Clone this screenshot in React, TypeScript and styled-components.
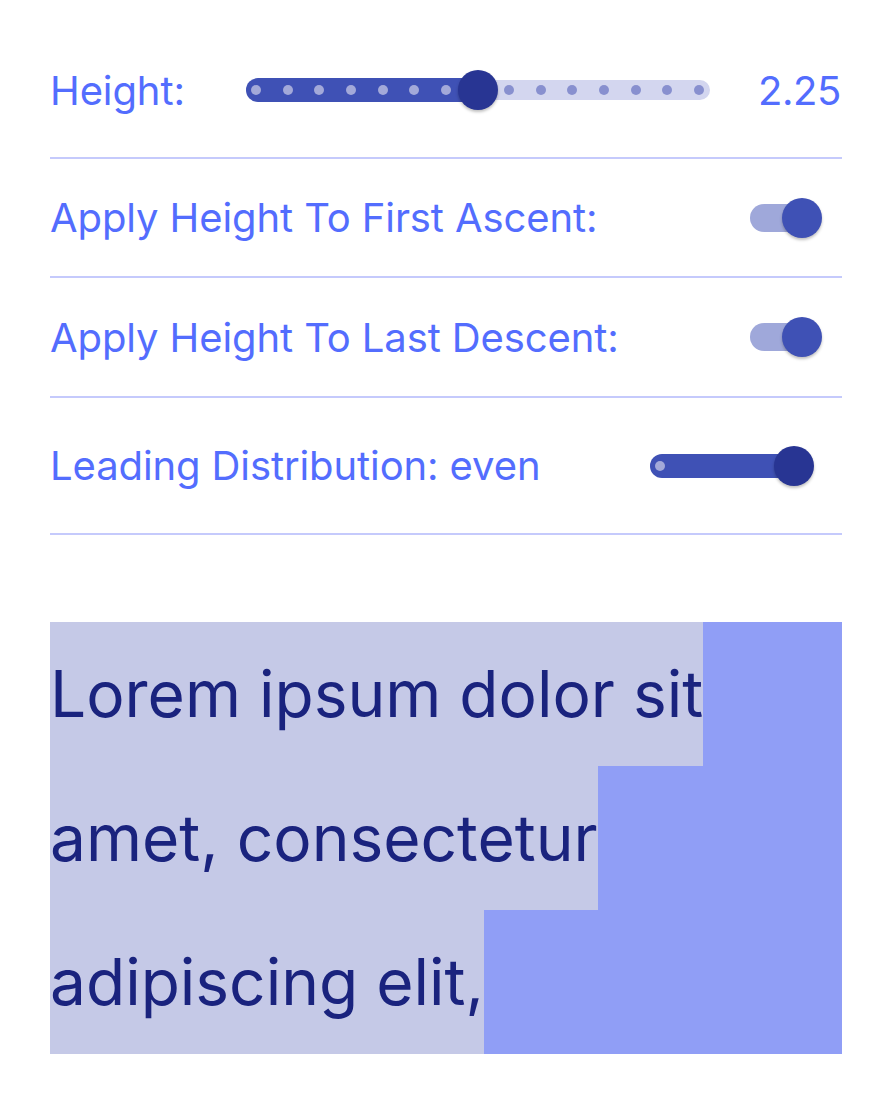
import React from 'react';
import styled, { createGlobalStyle } from 'styled-components';

const GlobalStyle = createGlobalStyle`
  html, body {
    margin: 0;
    padding: 0;
    background: #ffffff;
  }
`;

const Page = styled.div`
  display: flex;
  flex-direction: column;
  padding: 23px 50px 0 50px;
  font-family: Inter, "Noto Sans", sans-serif;
`;

const Row = styled.div<{ $height: number }>`
  display: flex;
  align-items: center;
  height: ${(p) => p.$height}px;
  border-bottom: 2px solid #c5cafc;
`;

const Label = styled.div<{ $width?: number }>`
  flex: ${(p) => (p.$width ? `0 0 ${p.$width}px` : '1')};
  font-size: 40px;
  letter-spacing: -0.1px;
  color: #536dfe;
  white-space: nowrap;
`;

const Value = styled.div`
  flex: 0 0 132px;
  text-align: right;
  font-size: 40px;
  letter-spacing: -0.4px;
  color: #536dfe;
  padding-right: 1px;
  box-sizing: border-box;
`;

const SliderBox = styled.div<{ $width?: number; $gapRight?: number }>`
  position: relative;
  flex: ${(p) => (p.$width ? `0 0 ${p.$width}px` : '1')};
  margin-right: ${(p) => p.$gapRight ?? 0}px;
  height: 40px;
  display: flex;
  align-items: center;
`;

const InactiveTrack = styled.div`
  flex: 1;
  height: 20px;
  border-radius: 10px;
  background: #d3d6ef;
`;

const ActiveTrack = styled.div`
  position: absolute;
  left: 0;
  top: 8px;
  height: 24px;
  border-radius: 12px 0 0 12px;
  background: #3f51b5;
`;

const Ticks = styled.div`
  position: absolute;
  left: 5px;
  right: 6px;
  top: 15px;
  height: 10px;
  display: flex;
  justify-content: space-between;
`;

const Tick = styled.span<{ $active: boolean }>`
  width: 10px;
  height: 10px;
  border-radius: 50%;
  background: ${(p) => (p.$active ? '#a3a9d9' : '#8890cf')};
`;

const Thumb = styled.div`
  position: absolute;
  top: 0;
  width: 40px;
  height: 40px;
  margin-left: -20px;
  border-radius: 50%;
  background: #283593;
  box-shadow: 0 2px 3px rgba(0, 0, 0, 0.25);
`;

const Slider = ({
  divisions,
  index,
  width,
  gapRight,
}: {
  divisions: number;
  index: number;
  width?: number;
  gapRight?: number;
}) => {
  const frac = index / divisions;
  // thumb travels between the first and last tick (10px in from each end)
  const pos = `calc(10px + (100% - 20px) * ${frac})`;
  return (
    <SliderBox $width={width} $gapRight={gapRight}>
      <InactiveTrack />
      <ActiveTrack style={{ width: pos }} />
      <Ticks>
        {Array.from({ length: divisions + 1 }, (_, i) => (
          <Tick key={i} $active={i <= index} />
        ))}
      </Ticks>
      <Thumb style={{ left: pos }} />
    </SliderBox>
  );
};

const SwitchBox = styled.div`
  position: relative;
  width: 66px;
  height: 28px;
  margin-right: 26px;
  border-radius: 14px;
  background: #9fa8da;
`;

const SwitchKnob = styled.div`
  position: absolute;
  right: -6px;
  top: -6px;
  width: 40px;
  height: 40px;
  border-radius: 50%;
  background: #3f51b5;
  box-shadow: 0 2px 3px rgba(0, 0, 0, 0.25);
`;

const Switch = () => (
  <SwitchBox>
    <SwitchKnob />
  </SwitchBox>
);

const Sample = styled.div`
  margin-top: 87px;
  display: flex;
  flex-direction: column;
  background: #909ef6;
  font-family: Inter, "Noto Sans", sans-serif;
  font-size: 64px;
  line-height: 144px;
  color: #1a237e;
`;

const SampleLine = styled.span`
  align-self: flex-start;
  height: 144px;
  background: #c5c9e7;
  white-space: nowrap;
`;

const App = () => (
  <>
    <GlobalStyle />
    <Page>
      <Row $height={134}>
        <Label $width={196}>Height:</Label>
        <Slider divisions={14} index={7} />
        <Value>2.25</Value>
      </Row>
      <Row $height={117}>
        <Label>Apply Height To First Ascent:</Label>
        <Switch />
      </Row>
      <Row $height={118}>
        <Label>Apply Height To Last Descent:</Label>
        <Switch />
      </Row>
      <Row $height={135}>
        <Label>Leading Distribution: even</Label>
        <Slider divisions={1} index={1} width={154} gapRight={38} />
      </Row>
      <Sample>
        <SampleLine>Lorem ipsum dolor sit</SampleLine>
        <SampleLine>amet, consectetur</SampleLine>
        <SampleLine>adipiscing elit,</SampleLine>
      </Sample>
    </Page>
  </>
);

export default App;
